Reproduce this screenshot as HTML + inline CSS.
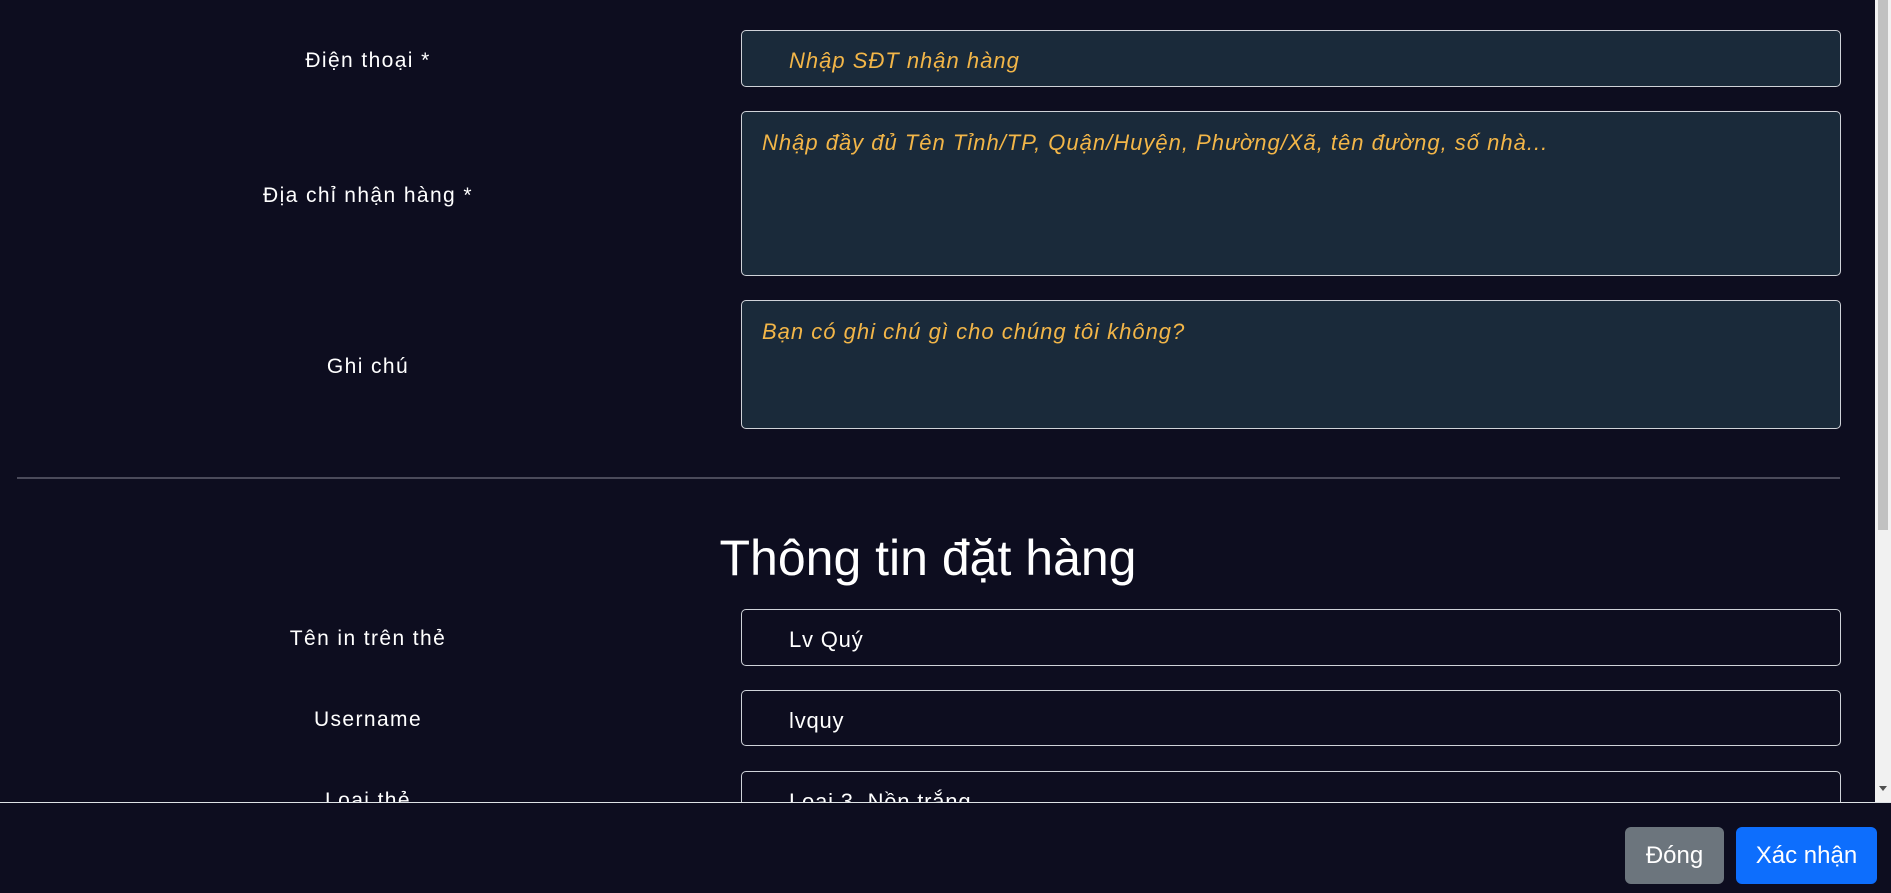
<!DOCTYPE html>
<html><head><meta charset="utf-8"><style>
body{margin:0;width:1891px;height:892px;background:#0d0d1f;overflow:hidden;position:relative;font-family:"Liberation Sans",sans-serif;color:#fff}
.lbl{position:absolute;left:218px;width:300px;text-align:center;font-size:21px;line-height:24px;letter-spacing:1.4px}
.in{position:absolute;left:741px;width:1100px;border:1px solid #cfd2d8;border-radius:5px;box-sizing:border-box}
.f{background:#1a2a3a}
.ph{position:absolute;color:#f3b648;font-style:italic;font-size:22px;line-height:26px;white-space:nowrap;letter-spacing:1px}
.v{position:absolute;left:47px;font-size:22px;line-height:26px;color:#fff;letter-spacing:0.8px}
</style></head><body>
<div class="lbl" style="top:49px">Điện thoại *</div>
<div class="in f" style="top:30px;height:57px"><span class="ph" style="left:47px;top:17px">Nhập SĐT nhận hàng</span></div>
<div class="lbl" style="top:184px">Địa chỉ nhận hàng *</div>
<div class="in f" style="top:111px;height:165px"><span class="ph" style="left:20px;top:18px">Nhập đầy đủ Tên Tỉnh/TP, Quận/Huyện, Phường/Xã, tên đường, số nhà...</span></div>
<div class="lbl" style="top:355px">Ghi chú</div>
<div class="in f" style="top:300px;height:129px"><span class="ph" style="left:20px;top:18px">Bạn có ghi chú gì cho chúng tôi không?</span></div>
<div style="position:absolute;left:17px;top:477px;width:1823px;height:2px;background:#4a4a5a"></div>
<div style="position:absolute;left:578px;width:700px;text-align:center;top:529px;font-size:50px;line-height:58px">Thông tin đặt hàng</div>
<div class="lbl" style="top:627px">Tên in trên thẻ</div>
<div class="in" style="top:609px;height:57px"><span class="v" style="top:17px">Lv Quý</span></div>
<div class="lbl" style="top:708px">Username</div>
<div class="in" style="top:690px;height:56px"><span class="v" style="top:17px">lvquy</span></div>
<div class="lbl" style="top:789px">Loại thẻ</div>
<div class="in" style="top:771px;height:57px"><span class="v" style="top:17px">Loại 3, Nền trắng</span></div>
<div style="position:absolute;left:1875px;top:0;width:16px;height:802px;background:#f1f1f1"></div>
<div style="position:absolute;left:1878px;top:0;width:10px;height:530px;background:#c1c1c1"></div>
<div style="position:absolute;left:1879px;top:786px;width:0;height:0;border-left:4px solid transparent;border-right:4px solid transparent;border-top:5px solid #505050"></div>
<div style="position:absolute;left:0;top:802px;width:1891px;height:90px;background:#0d0d1f;border-top:1px solid #dee2e6"></div>
<div style="position:absolute;left:1625px;top:827px;width:99px;height:57px;background:#6c757d;border-radius:6px;font-size:24px;line-height:57px;text-align:center">Đóng</div>
<div style="position:absolute;left:1736px;top:827px;width:141px;height:57px;background:#0d6efd;border-radius:6px;font-size:24px;line-height:57px;text-align:center">Xác nhận</div>
</body></html>
